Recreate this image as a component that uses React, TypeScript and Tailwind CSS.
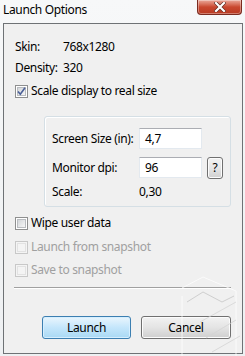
import React from "react";

const font = { fontFamily: '"Noto Sans", "Open Sans", Arial, sans-serif', letterSpacing: "-0.35px" };

function CheckBox({ checked, disabled }: { checked?: boolean; disabled?: boolean }) {
  return (
    <div
      className={
        "w-[13px] h-[13px] border flex items-center justify-center shrink-0 " +
        (disabled ? "border-[#c8c8c8] bg-[#f4f4f4]" : "border-[#8e8f8f] bg-white")
      }
    >
      <div
        className={
          "w-[9px] h-[9px] border relative " +
          (disabled
            ? "border-[#e2e2e2] bg-[#f4f4f4]"
            : "border-[#b9bcc0] bg-gradient-to-br from-[#d3d6d9] to-[#f6f6f6]")
        }
      >
        {checked && (
          <svg className="absolute left-[-2px] top-[-2px]" width="11" height="11" viewBox="0 0 11 11">
            <path d="M2 5.5 L4.3 8.2 L9 1.8" fill="none" stroke="#4a5f97" strokeWidth="1.6" />
          </svg>
        )}
      </div>
    </div>
  );
}

function CheckRow({ label, checked, disabled, className }: { label: string; checked?: boolean; disabled?: boolean; className?: string }) {
  return (
    <div className={"flex items-center h-[16px] pl-[11px] gap-[3px] " + (className ?? "")}>
      <CheckBox checked={checked} disabled={disabled} />
      <span className={"whitespace-nowrap text-[12px] leading-[16px] " + (disabled ? "text-[#a0a0a0]" : "text-black")}>{label}</span>
    </div>
  );
}

function TextBox({ value }: { value: string }) {
  return (
    <div className="w-[63px] h-[21px] bg-white border border-[#e3e9ef] border-t-[#abadb3] flex items-center pl-[5px] text-[12px] leading-[16px] text-black">
      {value}
    </div>
  );
}

export default function App() {
  return (
    <div
      style={font}
      className="relative w-[245px] h-[356px] overflow-hidden bg-gradient-to-b from-[#f7f8f9] via-[#f2f4f5] to-[#eef0f2]"
    >
      {/* Title bar */}
      <div className="h-[23px] flex items-start justify-between pl-[3px] pr-[3px]">
        <div className="h-[20px] flex items-center text-[12px] text-black whitespace-nowrap">Launch Options</div>
        <div className="w-[45px] h-[15px] rounded-b-[4px] border border-t-0 border-[#7a2b20] bg-gradient-to-b from-[#e9a89b] via-[#c9472f] to-[#b83a22] flex items-center justify-center shadow-[inset_0_0_0_1px_rgba(255,255,255,0.35)]">
          <svg width="12" height="10" viewBox="0 0 12 10">
            <path d="M2 1 L10 9 M10 1 L2 9" stroke="#5a2a22" strokeWidth="3.4" strokeLinecap="square" />
            <path d="M2 1 L10 9 M10 1 L2 9" stroke="#ffffff" strokeWidth="2.2" strokeLinecap="square" />
          </svg>
        </div>
      </div>

      {/* Client area */}
      <div className="mx-[3px] w-[240px] h-[331px] border border-[#6e7275] bg-[#f0f0f0] flex flex-col">
        <div className="flex items-center h-[16px] pl-[11px] mt-[15px] text-[12px] leading-[16px] text-black">
          <span className="w-[48px]">Skin:</span>
          <span>768x1280</span>
        </div>
        <div className="flex items-center h-[16px] pl-[11px] mt-[5px] text-[12px] leading-[16px] text-black">
          <span className="w-[48px]">Density:</span>
          <span>320</span>
        </div>
        <CheckRow label="Scale display to real size" checked className="mt-[7px]" />

        {/* Group box */}
        <div className="ml-[40px] mt-[17px] w-[187px] h-[91px] rounded-[3px] border border-[#d5dfe5] shadow-[inset_1px_1px_0_#ffffff] flex flex-col pl-[7px]">
          <div className="flex items-center mt-[11px] h-[21px]">
            <span className="w-[87px] whitespace-nowrap text-[12px] leading-[16px] text-black">Screen Size (in):</span>
            <TextBox value="4,7" />
          </div>
          <div className="flex items-center mt-[8px] h-[21px]">
            <span className="w-[87px] whitespace-nowrap text-[12px] leading-[16px] text-black">Monitor dpi:</span>
            <TextBox value="96" />
            <div className="ml-[5px] w-[16px] h-[22px] rounded-[3px] border border-[#707070] bg-gradient-to-b from-[#f2f2f2] via-[#e6e6e6] to-[#d0d0d0] flex items-center justify-center text-[12px] text-black shadow-[inset_0_0_0_1px_#fcfcfc]">
              ?
            </div>
          </div>
          <div className="flex items-center mt-[6px] h-[16px] text-[12px] leading-[16px] text-black">
            <span className="w-[87px]">Scale:</span>
            <span>0,30</span>
          </div>
        </div>

        <CheckRow label="Wipe user data" className="mt-[8px]" />
        <CheckRow label="Launch from snapshot" disabled className="mt-[8px]" />
        <CheckRow label="Save to snapshot" disabled className="mt-[7px]" />

        <div className="ml-[10px] mt-[9px] w-[217px] h-[2px] border-t border-[#a0a0a0] border-b border-b-white" />

        <div className="flex mt-[27px] pl-[38px] gap-[10px]">
          <div className="w-[89px] h-[23px] rounded-[3px] border border-[#3c7fb1] bg-gradient-to-b from-[#eaf6fd] via-[#c4e6fb] to-[#a9d9f4] shadow-[inset_0_0_0_1px_#d6efff] flex items-center justify-center text-[12px] text-black">
            Launch
          </div>
          <div className="w-[90px] h-[23px] rounded-[3px] border border-[#707070] bg-gradient-to-b from-[#f2f2f2] via-[#e4e4e4] to-[#cfcfcf] shadow-[inset_0_0_0_1px_#fcfcfc] flex items-center justify-center text-[12px] text-black">
            Cancel
          </div>
        </div>
      </div>

      {/* watermark */}
      <svg className="absolute left-[160px] top-[270px] pointer-events-none" width="85" height="86" viewBox="160 270 85 86">
        <g fill="none" strokeWidth="1" opacity="0.75">
          <path d="M182 288 L203 277 L236 291 L236 356" stroke="#ffffff" />
          <path d="M182 296 L182 356" stroke="#ffffff" />
          <path d="M187 302 L203 292 L222 302 L234 296" stroke="#c4c4c4" />
          <path d="M200 322 L236 302" stroke="#d4d4d4" />
          <path d="M206 338 L236 320" stroke="#d4d4d4" />
          <path d="M212 352 L240 336" stroke="#d4d4d4" />
        </g>
      </svg>
    </div>
  );
}
